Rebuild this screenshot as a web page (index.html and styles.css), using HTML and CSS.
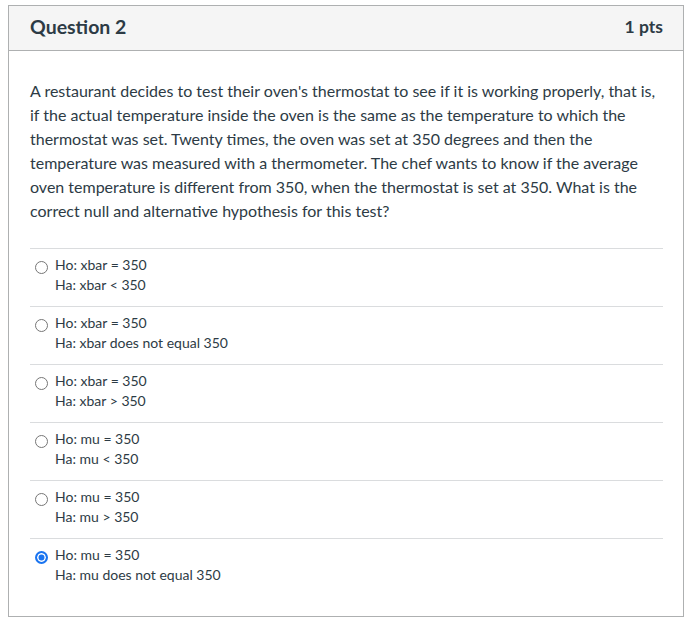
FILE: index.html
```html
<!DOCTYPE html>
<html>
<head>
<meta charset="utf-8">
<link rel="stylesheet" href="styles.css">
</head>
<body>
<div class="question">
  <div class="q-header">
    <span class="q-title">Question 2</span>
    <span class="q-pts">1 pts</span>
  </div>
  <div class="q-body">
    <p class="q-text">A restaurant decides to test their oven's thermostat to see if it is working properly, that is, if the actual temperature inside the oven is the same as the temperature to which the thermostat was set. Twenty times, the oven was set at 350 degrees and then the temperature was measured with a thermometer. The chef wants to know if the average oven temperature is different from 350, when the thermostat is set at 350. What is the correct null and alternative hypothesis for this test?</p>
    <div class="answers">
      <label class="answer"><span class="radio"></span><span class="a-text">Ho: xbar = 350<br>Ha: xbar &lt; 350</span></label>
      <label class="answer"><span class="radio"></span><span class="a-text">Ho: xbar = 350<br>Ha: xbar does not equal 350</span></label>
      <label class="answer"><span class="radio"></span><span class="a-text">Ho: xbar = 350<br>Ha: xbar &gt; 350</span></label>
      <label class="answer"><span class="radio"></span><span class="a-text">Ho: mu = 350<br>Ha: mu &lt; 350</span></label>
      <label class="answer"><span class="radio"></span><span class="a-text">Ho: mu = 350<br>Ha: mu &gt; 350</span></label>
      <label class="answer"><span class="radio checked"></span><span class="a-text">Ho: mu = 350<br>Ha: mu does not equal 350</span></label>
    </div>
  </div>
</div>
</body>
</html>
```
FILE: styles.css
```css
* { box-sizing: border-box; }
body {
  margin: 5px 0 0 8px;
  font-family: Lato, "Liberation Sans", sans-serif;
  color: #2d3b45;
  background: #fff;
}
.question {
  width: 676px;
  border: 1px solid #aeb0b1;
}
.q-header {
  height: 45px;
  background: #f5f5f5;
  border-bottom: 1px solid #aeb0b1;
  display: flex;
  align-items: center;
  justify-content: space-between;
  padding: 0 20px 4px 21px;
}
.q-title {
  font-size: 19.5px;
  font-weight: 700;
}
.q-pts {
  font-size: 17.5px;
  font-weight: 700;
}
.q-body {
  padding: 28px 20px 20px 21px;
}
.q-text {
  margin: 0;
  font-size: 16px;
  line-height: 24px;
}
.answers {
  margin-top: 25px;
}
.answer {
  display: flex;
  align-items: flex-start;
  border-top: 1px solid #dadcde;
  padding: 6px 0 11px 5px;
  font-size: 14px;
  line-height: 20px;
}
.radio {
  width: 13px;
  height: 13px;
  border: 1px solid #767676;
  border-radius: 50%;
  margin: 6px 7px 0 0;
  flex: none;
  background: #fff;
}
.radio.checked {
  border: 2px solid #1a74f0;
  background: #1a74f0;
  box-shadow: inset 0 0 0 1.5px #fff;
}
```
